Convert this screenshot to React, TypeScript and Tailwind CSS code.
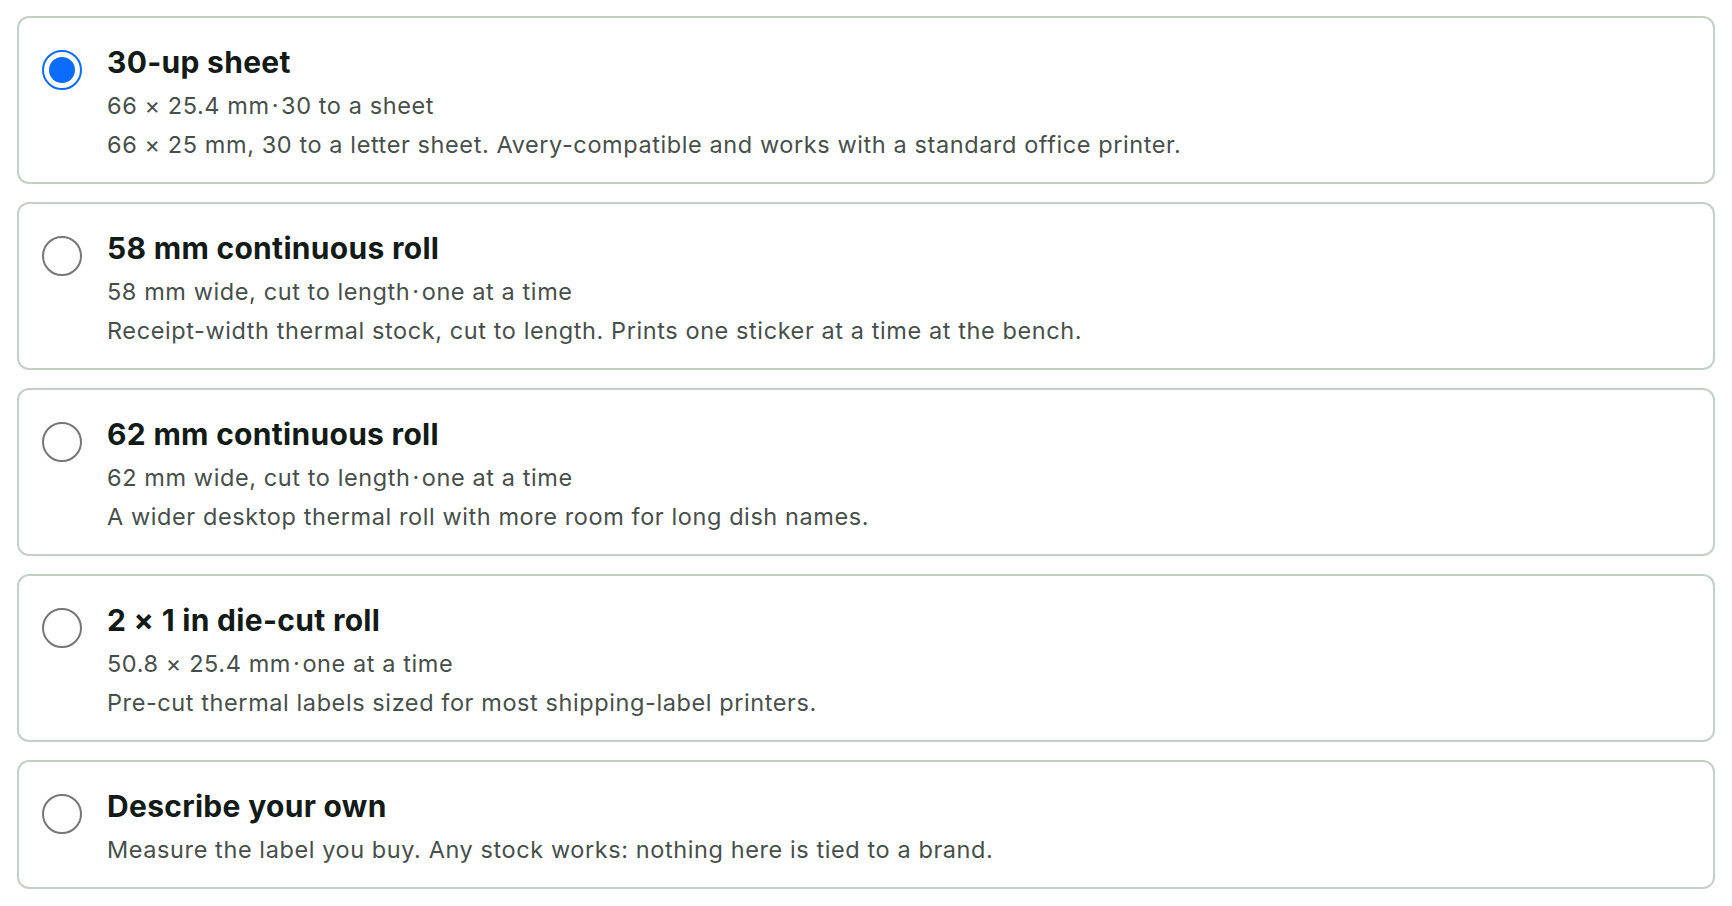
import { useState } from "react";

type Stock = {
  id: string;
  name: string;
  size?: string;
  mode?: string;
  blurb: string;
};

const STOCKS: Stock[] = [
  {
    id: "sheet30",
    name: "30-up sheet",
    size: "66 × 25.4 mm",
    mode: "30 to a sheet",
    blurb: "66 × 25 mm, 30 to a letter sheet. Avery-compatible and works with a standard office printer.",
  },
  {
    id: "roll58",
    name: "58 mm continuous roll",
    size: "58 mm wide, cut to length",
    mode: "one at a time",
    blurb: "Receipt-width thermal stock, cut to length. Prints one sticker at a time at the bench.",
  },
  {
    id: "roll62",
    name: "62 mm continuous roll",
    size: "62 mm wide, cut to length",
    mode: "one at a time",
    blurb: "A wider desktop thermal roll with more room for long dish names.",
  },
  {
    id: "diecut",
    name: "2 × 1 in die-cut roll",
    size: "50.8 × 25.4 mm",
    mode: "one at a time",
    blurb: "Pre-cut thermal labels sized for most shipping-label printers.",
  },
  {
    id: "custom",
    name: "Describe your own",
    blurb: "Measure the label you buy. Any stock works: nothing here is tied to a brand.",
  },
];

function Radio({ on }: { on: boolean }) {
  return (
    <span
      className={`mt-[6px] grid size-[40px] shrink-0 place-items-center rounded-full border-[2px] ${
        on ? "border-[#0b6cff]" : "border-[#767676]"
      }`}
    >
      {on && <span className="size-[26px] rounded-full bg-[#0b6cff]" />}
    </span>
  );
}

export default function App() {
  const [picked, setPicked] = useState("sheet30");

  return (
    <div
      className="flex min-h-screen flex-col gap-[18px] bg-white px-[17px] pt-[16px]"
      style={{ fontFamily: "Inter, 'Noto Sans', sans-serif" }}
    >
      {STOCKS.map((s) => (
        <button
          key={s.id}
          onClick={() => setPicked(s.id)}
          className="flex w-full items-start gap-[25px] rounded-[12px] border-[2px] border-[#c4d0c7] bg-white pb-[18px] pl-[23px] pr-6 pt-[26px] text-left"
        >
          <Radio on={picked === s.id} />
          <div className="min-w-0 flex-1">
            <div className="text-[30px] font-bold leading-[36px] tracking-[0.01em] text-[#121b17]">
              {s.name}
            </div>
            <div className="mt-[6px] text-[23.5px] leading-[39px] tracking-[0.025em] text-[#474f4b]">
              {s.size && (
                <div>
                  {s.size}
                  <span className="mx-[2px]">·</span>
                  {s.mode}
                </div>
              )}
              <div>{s.blurb}</div>
            </div>
          </div>
        </button>
      ))}
    </div>
  );
}
